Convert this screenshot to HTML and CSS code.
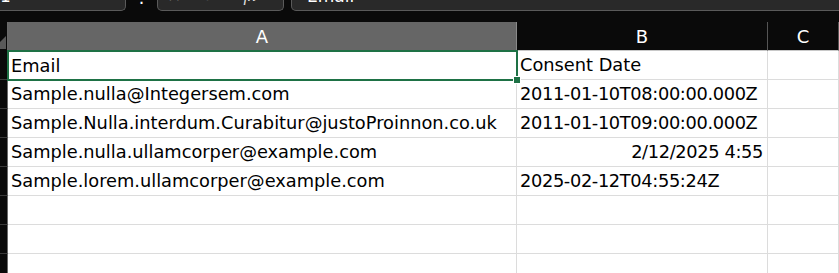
FILE: index.html
```html
<!DOCTYPE html>
<html lang="en">
	<head>
		<meta charset="utf-8"/>
		<title>Sheet</title>
		<link rel="stylesheet" href="styles.css">
	</head>
	<body>
		<div class="app">
			<div class="toolbar">
				<div class="namebox">1</div>
				<div class="more">&#8942;</div>
				<div class="fx-buttons">
					<span class="x">&#10005;</span>
					<span class="ok">&#10003;</span>
					<span class="fx">fx</span>
				</div>
				<div class="formula">Email</div>
			</div>
			<div class="gap"></div>
			<div class="sheet">
				<div class="corner">
					<svg width="8" height="29" viewBox="0 0 8 29"><polygon points="6,14 6,27 -7,27" fill="#5a5a5a"/></svg>
				</div>
				<div class="colhead sel">A</div>
				<div class="colhead">B</div>
				<div class="colhead">C</div>

				<div class="rowhead"></div>
				<div class="cell active">Email<span class="handle"></span></div>
				<div class="cell">Consent Date</div>
				<div class="cell"></div>

				<div class="rowhead"></div>
				<div class="cell">Sample.nulla@Integersem.com</div>
				<div class="cell date">2011-01-10T08:00:00.000Z</div>
				<div class="cell"></div>

				<div class="rowhead"></div>
				<div class="cell">Sample.Nulla.interdum.Curabitur@justoProinnon.co.uk</div>
				<div class="cell date">2011-01-10T09:00:00.000Z</div>
				<div class="cell"></div>

				<div class="rowhead"></div>
				<div class="cell">Sample.nulla.ullamcorper@example.com</div>
				<div class="cell date num">2/12/2025 4:55</div>
				<div class="cell"></div>

				<div class="rowhead"></div>
				<div class="cell">Sample.lorem.ullamcorper@example.com</div>
				<div class="cell date">2025-02-12T04:55:24Z</div>
				<div class="cell"></div>

				<div class="rowhead"></div>
				<div class="cell"></div>
				<div class="cell"></div>
				<div class="cell"></div>

				<div class="rowhead"></div>
				<div class="cell"></div>
				<div class="cell"></div>
				<div class="cell"></div>

				<div class="rowhead"></div>
				<div class="cell"></div>
				<div class="cell"></div>
				<div class="cell"></div>
			</div>
		</div>
	</body>
</html>
```

FILE: styles.css
```css
html, body {
	width: 100%; height: 100%;
	padding: 0; border: 0; margin: 0;
	background: #0a0a0a;
	overflow: hidden;
	font-family: "DejaVu Sans", sans-serif;
}

.toolbar {
	display: flex;
	align-items: flex-end;
	height: 11px;
	overflow: hidden;
	background: #0a0a0a;
	color: #fff;
}
.namebox, .fx-buttons, .formula {
	height: 34px;
	box-sizing: border-box;
	background: #292929;
	border: 1px solid #5a5a5a;
	border-top: none;
	border-radius: 0 0 5px 5px;
	display: flex;
	align-items: flex-end;
	font-size: 17px;
	line-height: 20px;
	padding-bottom: 4px;
}
.namebox {
	width: 132px;
	margin-left: -6px;
	padding-left: 6px;
	border-left: none;
	border-radius: 0 0 5px 0;
}
.more {
	width: 31px;
	text-align: center;
	font-size: 18px;
	line-height: 20px;
	align-self: flex-end;
	margin-bottom: 5px;
}
.fx-buttons {
	width: 127px;
	color: #888;
	padding-left: 9px;
	gap: 22px;
}
.fx-buttons .fx {
	color: #ddd;
	font-style: italic;
	font-family: "Liberation Serif", serif;
	margin-left: 4px;
}
.formula {
	flex: 1;
	margin-left: 7px;
	margin-right: -6px;
	padding-left: 15px;
}

.gap {
	height: 11px;
}

.sheet {
	display: grid;
	grid-template-columns: 8px 509px 251px 1fr;
	grid-auto-rows: 29px;
	background: #fff;
}
.corner, .rowhead {
	background: #0a0a0a;
	border-right: 1px solid #6a6a6a;
	border-bottom: 1px solid #3a3a3a;
	box-sizing: border-box;
}
.corner {
	border-bottom-color: #0a0a0a;
}
.corner svg {
	display: block;
}
.colhead {
	background: #0a0a0a;
	color: #fff;
	font-size: 18px;
	display: flex;
	align-items: center;
	justify-content: center;
	border-right: 1px solid #555;
	border-bottom: 1px solid #c8c8c8;
	box-sizing: border-box;
}
.colhead.sel {
	background: #666;
	border-right-color: #8a8a8a;
	border-bottom-color: #1e7145;
}
.cell {
	position: relative;
	box-sizing: border-box;
	border-right: 1px solid #dcdcdc;
	border-bottom: 1px solid #dcdcdc;
	color: #000;
	font-size: 17.8px;
	line-height: 20px;
	padding: 0 3px 4px 3px;
	display: flex;
	align-items: flex-end;
	white-space: nowrap;
}
.cell.date {
	letter-spacing: -0.35px;
}
.cell.num {
	justify-content: flex-end;
	padding-right: 4px;
}
.cell.active {
	box-shadow: inset 0 0 0 2px #1e7145;
	margin: -1px;
	padding-left: 4px;
	padding-bottom: 5px;
	border: none;
	z-index: 1;
}
.handle {
	position: absolute;
	right: -3px;
	bottom: -3px;
	width: 6px;
	height: 6px;
	background: #1e7145;
	border: 1px solid #fff;
}
```
